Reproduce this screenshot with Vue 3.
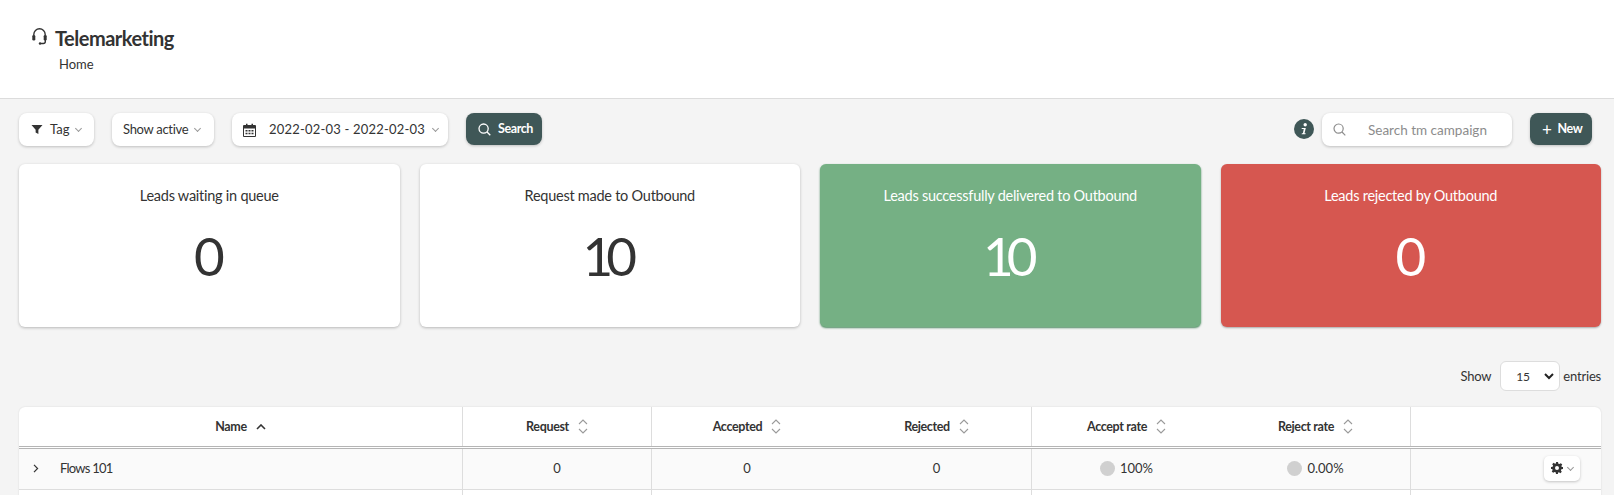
<script setup>
const cards = [
  { title: 'Leads waiting in queue', value: '0', cls: '' },
  { title: 'Request made to Outbound', value: '10', cls: '' },
  { title: 'Leads successfully delivered to Outbound', value: '10', cls: 'green' },
  { title: 'Leads rejected by Outbound', value: '0', cls: 'red' },
]
const cols = [
  { name: 'Request', w: 189, b: true },
  { name: 'Accepted', w: 190, b: false },
  { name: 'Rejected', w: 190, b: true },
  { name: 'Accept rate', w: 189, b: false },
  { name: 'Reject rate', w: 190, b: true },
]
</script>

<template>
  <div class="page">
    <header class="head">
      <div class="title-row">
        <svg class="head-ico" width="15" height="17" viewBox="0 0 15 17" fill="none" stroke="#333" stroke-width="1.4">
          <path d="M1.800 7V6.500a5.700 5.700 0 0 1 11.400 0V7" />
          <rect x=".3" y="7" width="3" height="5.500" rx="1.300" fill="#333" stroke="none" />
          <rect x="11.700" y="7" width="3" height="5.500" rx="1.300" fill="#333" stroke="none" />
          <path d="M13.300 12v1.500a2 2 0 0 1-2 2H8.500" />
          <circle cx="8" cy="15.500" r="1.200" fill="#333" stroke="none" />
        </svg>
        <h1>Telemarketing</h1>
      </div>
      <div class="crumb">Home</div>
    </header>

    <main class="content">
      <div class="toolbar">
        <button class="btn tag">
          <svg width="12" height="11" viewBox="0 0 13 12"><path d="M.5 1h12L8 6.200V11L5 9.400V6.200z" fill="#333" /></svg>
          <span>Tag</span><i class="caret"></i>
        </button>
        <button class="btn active"><span>Show active</span><i class="caret"></i></button>
        <button class="btn date">
          <svg width="13" height="14" viewBox="0 0 13 14" fill="#333">
            <path d="M1 2h2V.8h1.500V2h4V.8H10V2h2a1 1 0 0 1 1 1v10a1 1 0 0 1-1 1H1a1 1 0 0 1-1-1V3a1 1 0 0 1 1-1zm0 3.500V13h11V5.500z" fill-rule="evenodd" />
            <path d="M2.500 7h2v1.500h-2zM5.500 7h2v1.500h-2zM8.500 7h2v1.500h-2zM2.500 9.800h2v1.500h-2zM5.500 9.800h2v1.500h-2zM8.500 9.800h2v1.500h-2z" />
          </svg>
          <span class="date-text">2022-02-03 - 2022-02-03</span><i class="caret"></i>
        </button>
        <button class="btn dark search">
          <svg width="13" height="13" viewBox="0 0 13 13" fill="none" stroke="#fff" stroke-width="1.300"><circle cx="5.600" cy="5.600" r="4.600" /><path d="M9 9l3.300 3.300" /></svg>
          <span>Search</span>
        </button>
        <div class="spacer"></div>
        <svg class="info" width="20" height="20" viewBox="0 0 20 20">
          <circle cx="10" cy="10" r="10" fill="#3f5757" />
          <circle cx="11.200" cy="5.800" r="1.700" fill="#fff" />
          <path d="M7.800 9h4l-1.300 5.200h1.200l-.3 1.100H7.600l.3-1.100h1l.9-4.100h-2.200z" fill="#fff" />
        </svg>
        <label class="search-box">
          <svg width="13" height="13" viewBox="0 0 13 13" fill="none" stroke="#8c8c8c" stroke-width="1.200"><circle cx="5.600" cy="5.600" r="4.600" /><path d="M9 9l3.300 3.300" /></svg>
          <span>Search tm campaign</span>
        </label>
        <button class="btn dark new"><span class="plus">+</span><span>New</span></button>
      </div>

      <section class="cards">
        <article v-for="c in cards" :key="c.title" class="card" :class="c.cls">
          <div class="card-title">{{ c.title }}</div>
          <div class="card-value"><span :class="{ tight: c.value.length > 1 }">{{ c.value }}</span></div>
        </article>
      </section>

      <div class="entries">
        <span>Show</span>
        <div class="select"><span>15</span>
          <svg width="10" height="7" viewBox="0 0 10 7" fill="none" stroke="#222" stroke-width="2"><path d="M1 1l4 4 4-4" /></svg>
        </div>
        <span>entries</span>
      </div>

      <div class="table">
        <div class="row th">
          <div class="cell name b"><span>Name</span>
            <svg width="10" height="6" viewBox="0 0 10 6" fill="none" stroke="#333" stroke-width="1.600"><path d="M1 5l4-4 4 4" /></svg>
          </div>
          <div v-for="c in cols" :key="c.name" class="cell" :class="{ b: c.b }" :style="{ width: c.w + 'px' }">
            <span>{{ c.name }}</span>
            <svg width="10" height="15" viewBox="0 0 10 15" fill="none" stroke="#9a9a9a" stroke-width="1.100"><path d="M1 5l4-4 4 4M1 10l4 4 4-4" /></svg>
          </div>
          <div class="cell last"></div>
        </div>
        <div class="row td">
          <div class="cell name b left">
            <svg width="6" height="9" viewBox="0 0 6 9" fill="none" stroke="#333" stroke-width="1.200"><path d="M1 .8l3.600 3.700L1 8.200" /></svg>
            <span class="flow">Flows 101</span>
          </div>
          <div class="cell b" style="width: 189px">0</div>
          <div class="cell" style="width: 190px">0</div>
          <div class="cell b" style="width: 190px">0</div>
          <div class="cell" style="width: 189px"><i class="dot"></i>100%</div>
          <div class="cell b" style="width: 190px"><i class="dot"></i>0.00%</div>
          <div class="cell last end">
            <button class="btn gear">
              <svg width="12" height="12" viewBox="0 0 24 24" fill="#333"><path fill-rule="evenodd" d="M10 0h4l.7 3.300 2.100.9 2.900-1.800 2.800 2.800-1.800 2.900.9 2.100L24 10v4l-3.300.7-.9 2.100 1.800 2.900-2.800 2.800-2.900-1.800-2.100.9L14 24h-4l-.7-3.300-2.100-.9-2.900 1.800-2.800-2.800 1.800-2.900-.9-2.100L0 14v-4l3.300-.7.9-2.100-1.800-2.900 2.800-2.800 2.900 1.800 2.100-.9zM12 8a4 4 0 1 0 0 8 4 4 0 0 0 0-8z" /></svg>
              <i class="caret"></i>
            </button>
          </div>
        </div>
        <div class="row tail">
          <div class="cell name b"></div>
          <div class="cell b" style="width: 189px"></div>
          <div class="cell" style="width: 190px"></div>
          <div class="cell b" style="width: 190px"></div>
          <div class="cell" style="width: 189px"></div>
          <div class="cell b" style="width: 190px"></div>
          <div class="cell last"></div>
        </div>
      </div>
    </main>
  </div>
</template>

<style>
html, body { margin: 0; background: #f4f4f4; overflow: hidden; }
</style>

<style scoped>
.page {
  height: 495px;
  overflow: hidden;
  font-family: Lato, "Open Sans", sans-serif;
  color: #333;
  font-size: 13px;
  background: #f4f4f4;
}
.head {
  height: 99px;
  box-sizing: border-box;
  background: #fff;
  border-bottom: 1px solid #dcdcdc;
  padding: 27px 0 0 32px;
}
.title-row { display: flex; align-items: center; height: 22px; }
.head-ico { margin-right: 8px; margin-top: -4px; }
h1 { margin: 0; font-size: 20px; font-weight: 700; letter-spacing: -0.5px; color: #333; line-height: 22px; }
.crumb { margin: 7px 0 0 27px; font-size: 13px; line-height: 16px; }
.content { padding: 14px 13px 0 19px; }
.toolbar { display: flex; align-items: flex-start; height: 33px; }
.btn {
  display: inline-flex;
  align-items: center;
  flex-shrink: 0;
  white-space: nowrap;
  box-sizing: border-box;
  height: 33px;
  border: 0;
  border-radius: 8px;
  background: #fff;
  box-shadow: 0 1px 3px rgba(0, 0, 0, 0.22);
  font: inherit;
  color: #333;
  padding: 0;
}
.caret {
  width: 4px;
  height: 4px;
  border-right: 1px solid #999;
  border-bottom: 1px solid #999;
  transform: rotate(45deg);
  margin-top: -2px;
}
.tag { width: 75px; padding-left: 12px; gap: 7px; margin-right: 18px; }
.active { width: 102px; padding-left: 11px; gap: 7px; margin-right: 18px; letter-spacing: -0.3px; }
.date { width: 216px; padding-left: 11px; margin-right: 18px; }
.date-text { margin: 0 8px 0 13px; letter-spacing: 0.2px; font-size: 13px; }
.dark { background: #3f5757; color: #fff; font-weight: 700; font-size: 12.500px; letter-spacing: -0.4px; }
.search { width: 76px; height: 32px; padding-left: 12px; gap: 7px; }
.spacer { flex: 1; }
.info { margin: 6px 8px 0 0; }
.search-box {
  display: flex;
  align-items: center;
  box-sizing: border-box;
  width: 190px;
  height: 33px;
  border-radius: 8px;
  background: #fff;
  box-shadow: 0 1px 3px rgba(0, 0, 0, 0.22);
  padding-left: 11px;
  color: #8c8c8c;
  margin-right: 18px;
  font-size: 13.500px;
}
.search-box span { margin-left: 22px; }
.new { width: 62px; height: 32px; padding-left: 12px; gap: 6px; margin-right: 9px; }
.plus { font-size: 17px; font-weight: 400; line-height: 1; }
.cards { display: grid; grid-template-columns: repeat(4, 1fr); column-gap: 20px; margin-top: 18px; }
.card {
  height: 163px;
  box-sizing: border-box;
  border-radius: 6px;
  background: #fff;
  box-shadow: 0 1px 3px rgba(0, 0, 0, 0.25);
  text-align: center;
  padding-top: 22px;
}
.card-title { font-size: 14.500px; line-height: 20px; letter-spacing: -0.25px; }
.card-value { font-size: 53px; line-height: 60px; margin-top: 20px; }
.tight { display: inline-block; letter-spacing: -7px; padding-right: 7px; }
.green { background: #75b084; color: #fff; box-shadow: 0 1px 2px #4f8a63; }
.red { background: #d65750; color: #fff; box-shadow: 0 1px 2px rgba(0, 0, 0, 0.3); }
.entries {
  display: flex;
  justify-content: flex-end;
  align-items: center;
  height: 30px;
  margin-top: 34px;
  letter-spacing: -0.2px;
}
.select {
  box-sizing: border-box;
  width: 60px;
  height: 30px;
  margin: 0 3px 0 9px;
  padding: 0 5px 0 15px;
  display: flex;
  align-items: center;
  justify-content: space-between;
  background: #fff;
  border: 1px solid #ddd;
  border-radius: 6px;
  font-size: 12px;
}
.table {
  margin-top: 16px;
  background: #fff;
  border-radius: 6px 6px 0 0;
  box-shadow: 0 0 2px rgba(0, 0, 0, 0.12);
  width: 1582px;
}
.row { display: flex; }
.cell {
  box-sizing: border-box;
  display: flex;
  align-items: center;
  justify-content: center;
  gap: 9px;
}
.name { width: 444px; }
.b { border-right: 1px solid #ddd; }
.last { flex: 1; }
.end { justify-content: flex-end; padding-right: 21px; }
.th { height: 42px; font-weight: 700; font-size: 12.500px; letter-spacing: -0.35px; border-bottom: 3px double #b5b5b5; box-sizing: border-box; }
.td { height: 41px; background: #fafafa; border-bottom: 1px solid #ddd; box-sizing: border-box; }
.td .cell { padding-bottom: 2px; }
.left { justify-content: flex-start; padding-left: 14px; gap: 21px; }
.flow { letter-spacing: -0.75px; }
.tail { height: 20px; background: #fff; }
.dot { width: 15px; height: 15px; border-radius: 50%; background: #d0d0d0; margin-right: -4px; }
.gear { width: 36px; height: 25px; border-radius: 5px; padding-left: 7px; gap: 5px; }
.btn span { line-height: 1; }
</style>
